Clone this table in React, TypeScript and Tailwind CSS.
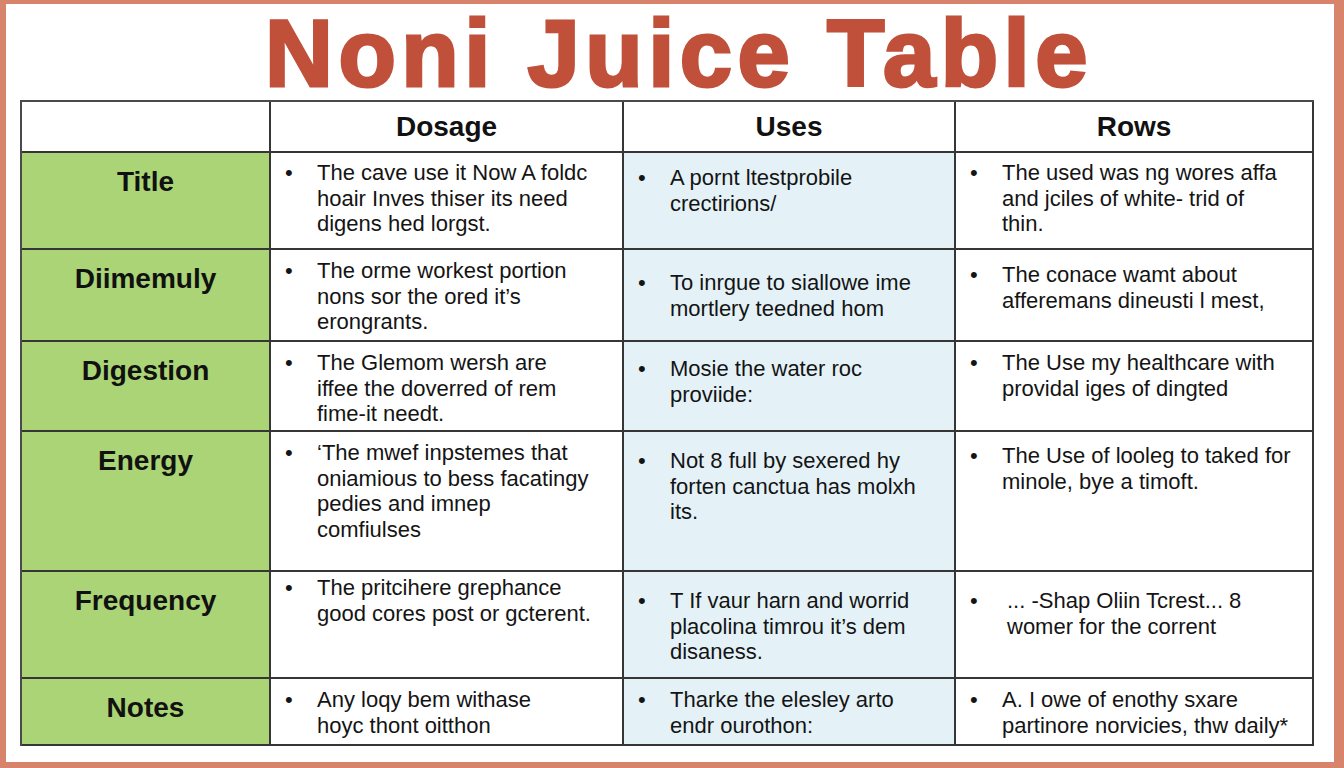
import React from 'react';

type Cell = { lines: string[]; pt: number; indent?: number };
type Row = { label: string; cells: Cell[] };

const headers = ['Dosage', 'Uses', 'Rows'];

const rows: Row[] = [
  {
    label: 'Title',
    cells: [
      { pt: 7, lines: ['The cave use it Now A foldc', 'hoair Inves thiser its need', 'digens hed lorgst.'] },
      { pt: 12, lines: ['A pornt ltestprobile', 'crectirions/'] },
      { pt: 7, lines: ['The used was ng wores affa', 'and jciles of white- trid of', 'thin.'] },
    ],
  },
  {
    label: 'Diimemuly',
    cells: [
      { pt: 8, lines: ['The orme workest portion', 'nons sor the ored it\u2019s', 'erongrants.'] },
      { pt: 20, lines: ['To inrgue to siallowe ime', 'mortlery teedned hom'] },
      { pt: 12, lines: ['The conace wamt about', 'afferemans dineusti l mest,'] },
    ],
  },
  {
    label: 'Digestion',
    cells: [
      { pt: 8, lines: ['The Glemom wersh are', 'iffee the doverred of rem', 'fime-it needt.'] },
      { pt: 14, lines: ['Mosie the water roc', 'proviide:'] },
      { pt: 8, lines: ['The Use my healthcare with', 'providal iges of dingted'] },
    ],
  },
  {
    label: 'Energy',
    cells: [
      { pt: 8, lines: ['\u2018The mwef inpstemes that', 'oniamious to bess facatingy', 'pedies and imnep', 'comfiulses'] },
      { pt: 16, lines: ['Not 8 full by sexered hy', 'forten canctua has molxh', 'its.'] },
      { pt: 11, lines: ['The Use of looleg to taked for', 'minole, bye a timoft.'] },
    ],
  },
  {
    label: 'Frequency',
    cells: [
      { pt: 3, lines: ['The pritcihere grephance', 'good cores post or gcterent.'] },
      { pt: 16, lines: ['T If vaur harn and worrid', 'placolina timrou it\u2019s dem', 'disaness.'] },
      { pt: 16, indent: 5, lines: ['... -Shap Oliin Tcrest... 8', 'womer for the corrent'] },
    ],
  },
  {
    label: 'Notes',
    cells: [
      { pt: 8, lines: ['Any loqy bem withase', 'hoyc thont oitthon'] },
      { pt: 8, lines: ['Tharke the elesley arto', 'endr ourothon:'] },
      { pt: 8, lines: ['A. I owe of enothy sxare', 'partinore norvicies, thw daily*'] },
    ],
  },
];

function BulletCell({ cell, blue }: { cell: Cell; blue?: boolean }) {
  return (
    <div
      className={`border-r-2 border-b-2 border-[#363636] pl-[14px] ${blue ? 'bg-[#e4f2f8]' : 'bg-white'}`}
      style={{ paddingTop: cell.pt }}
    >
      <div className="flex text-[22px] leading-[25.5px] text-[#141414]">
        <span className="w-[32px] shrink-0">•</span>
        <div style={{ paddingLeft: cell.indent ?? 0 }}>
          {cell.lines.map((l, i) => (
            <div key={i} className="whitespace-nowrap">
              {l}
            </div>
          ))}
        </div>
      </div>
    </div>
  );
}

export default function App() {
  return (
    <div
      className="h-[768px] w-[1344px] overflow-hidden border-t-[4px] border-l-[6px] border-r-[10px] border-b-[6px] border-[#d8836c] bg-white pt-[10px]"
      style={{ fontFamily: '"Liberation Sans", Arial, sans-serif' }}
    >
      <h1 className="h-[80px] pl-[18px] text-center text-[94px] font-bold leading-[80px] tracking-[5.5px] text-[#c1503a] [-webkit-text-stroke:3px_#c1503a]">
        Noni Juice Table
      </h1>

      <div className="mt-[6px] ml-[14px] grid w-[1294px] grid-cols-[249px_353px_332px_358px] grid-rows-[51px_97px_92px_90px_140px_107px_67px] border-t-2 border-l-2 border-[#4a4a4a]">
        <div className="border-r-2 border-b-2 border-[#363636] bg-white" />
        {headers.map((h) => (
          <div
            key={h}
            className="flex items-center justify-center border-r-2 border-b-2 border-[#363636] bg-white text-[28px] font-bold text-[#111]"
          >
            {h}
          </div>
        ))}

        {rows.map((r) => (
          <React.Fragment key={r.label}>
            <div className="border-r-2 border-b-2 border-[#363636] bg-[#aad475] pt-[13px] text-center text-[28px] font-bold leading-[32px] text-[#111]">
              {r.label}
            </div>
            <BulletCell cell={r.cells[0]} />
            <BulletCell cell={r.cells[1]} blue />
            <BulletCell cell={r.cells[2]} />
          </React.Fragment>
        ))}
      </div>
    </div>
  );
}
